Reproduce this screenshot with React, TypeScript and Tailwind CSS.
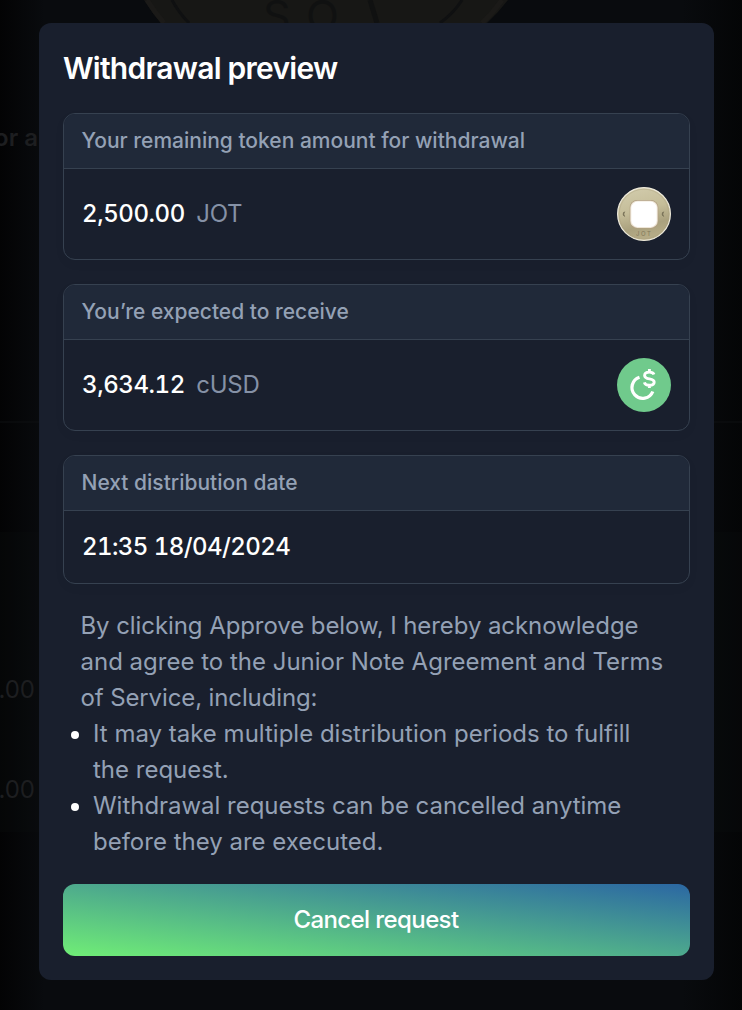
import type { ReactNode } from "react";

function JotCoin() {
  return (
    <svg className="size-[54px] shrink-0" viewBox="0 0 54 54">
      <defs>
        <linearGradient id="coin" x1="0" y1="0" x2="0.25" y2="1">
          <stop offset="0" stopColor="#d3cdae" />
          <stop offset="0.5" stopColor="#c5bd99" />
          <stop offset="0.8" stopColor="#aaa17e" />
          <stop offset="1" stopColor="#b5ab86" />
        </linearGradient>
      </defs>
      <circle cx="27" cy="27" r="26.4" fill="url(#coin)" stroke="#eeeadb" strokeWidth="1.2" />
      <circle cx="27" cy="27" r="24.8" fill="none" stroke="#a99f7d" strokeWidth="0.6" opacity="0.65" />
      <rect x="12.7" y="13" width="28.6" height="28.6" rx="7.5" fill="#b19f82" />
      <rect x="13.3" y="13.7" width="27.4" height="27.2" rx="7" fill="#eee6d7" />
      <rect x="14.3" y="14.5" width="25.4" height="25.4" rx="6.5" fill="#fff" />
      <path d="M7.5 24.8a2.7 2.7 0 0 0 0 4.6l-.8-2.3z" fill="#777057" stroke="#777057" strokeWidth=".9" />
      <path d="M46.5 24.8a2.7 2.7 0 0 0 0 4.6l-.8-2.3z" fill="#777057" stroke="#777057" strokeWidth=".9" />
      <text x="27.3" y="49" textAnchor="middle" fontFamily="Inter, sans-serif" fontSize="6" letterSpacing="1.6" fill="#81785b">JOT</text>
    </svg>
  );
}

function CusdCoin() {
  return (
    <svg className="size-[54px] shrink-0" viewBox="0 0 54 54" fill="none">
      <circle cx="27" cy="27" r="27" fill="#70ca8c" />
      <path d="M22.5 19.2A10.8 10.8 0 1 0 35.8 33.5" stroke="#fff" strokeWidth="3.3" />
      <path d="M37 16.5c-.7-1.7-2.2-2.4-4.7-2.4-3 0-4.7 1.3-4.7 3.3 0 5 9.6 1.9 9.6 6.6 0 2.1-1.8 3.3-4.8 3.3-2.7 0-4.5-1-5.1-2.9M32.4 11v3.2M32.4 27v3" stroke="#fff" strokeWidth="2.9" />
    </svg>
  );
}

function Card({ title, children }: { title: string; children: ReactNode }) {
  return (
    <section className="overflow-hidden rounded-xl border border-[#364150] shadow-[0_4px_12px_rgba(0,0,0,0.03)]">
      <h2 className="flex h-[55px] items-center border-b border-[#364150] bg-[#202939] px-[17.5px] text-[21px] font-medium text-[#94a1b5]">
        {title}
      </h2>
      {children}
    </section>
  );
}

function Amount({ value, unit, icon }: { value: string; unit: string; icon: ReactNode }) {
  return (
    <div className="flex h-[90px] items-center justify-between px-[18px]">
      <p className="flex gap-[11.5px] text-2xl">
        <span className="font-medium tracking-[-0.42px] text-white tabular-nums">{value}</span>
        <span className="tracking-[-0.3px] text-[#8591a6]">{unit}</span>
      </p>
      {icon}
    </div>
  );
}

export default function App() {
  return (
    <main className="relative h-[1010px] w-[742px] overflow-hidden bg-[#050609] bg-[linear-gradient(90deg,#030304_0%,#090b0e_6%,#090b0e_92%,#040506_100%)] px-[39px] pt-[23px] pr-[28px] font-['Inter',sans-serif]">
      <svg className="absolute inset-0 h-[1010px] w-[742px]" fill="none">
        <path d="M144 0h364q-10 13-21 23H161Q152 13 144 0z" fill="#171715" />
        <path d="M147 0q8 13 17 23M502 0q-9 13-20 23" stroke="#1b1a18" strokeWidth="5" />
        <path d="M172 0q7 13 17 23M462 0q-8 13-22 23" stroke="#0f1011" strokeWidth="3" />
        <path d="M0 422h39M714 422h28" stroke="#0e1013" />
        <path d="M0 532h39v300H0zM714 532h28v300h-28z" fill="#0b0f0f" opacity=".25" />
        <g fontFamily="Inter, sans-serif" fill="#1d1e20">
          <text x="263" y="31" fontSize="43" fill="#101111">S</text>
          <text x="306" y="31" fontSize="43" fill="#101111">O</text>
          <path d="m370 0 7 23" stroke="#101111" strokeWidth="5" />
          <text x="38" y="146" textAnchor="end" fontSize="24" fontWeight="600">or a</text>
          <text x="35" y="698" textAnchor="end" fontSize="24">.00</text>
          <text x="35" y="798" textAnchor="end" fontSize="24">.00</text>
        </g>
      </svg>
      <div className="relative flex h-[957px] w-[675px] flex-col rounded-xl bg-[#191f2d] p-6">
        <h1 className="h-[66px] pt-[3px] text-[30px] leading-9 font-semibold tracking-[-0.75px] text-white">Withdrawal preview</h1>
        <div className="flex flex-col gap-6">
          <Card title="Your remaining token amount for withdrawal">
            <Amount value="2,500.00" unit="JOT" icon={<JotCoin />} />
          </Card>
          <Card title="You’re expected to receive">
            <Amount value="3,634.12" unit="cUSD" icon={<CusdCoin />} />
          </Card>
          <Card title="Next distribution date">
            <p className="flex h-[72px] items-center px-[18px] text-2xl font-medium tracking-[-0.56px] text-white tabular-nums">21:35 18/04/2024</p>
          </Card>
        </div>
        <div className="mt-6 text-2xl leading-9 tracking-normal text-[#94a1b5]">
          <p className="pl-[17.5px]">
            <span className="tracking-[-0.08px]">By clicking Approve below, I hereby acknowledge</span><br />
            and agree to the Junior Note Agreement and Terms<br />
            <span className="tracking-[-0.12px]">of Service, including:</span>
          </p>
          <ul>
            <li className="flex gap-[14px] pl-2">
              <span className="mt-[15px] size-2 shrink-0 rounded-full bg-white" />
              <span>It may take multiple distribution periods to fulfill<br />the request.</span>
            </li>
            <li className="flex gap-[14px] pl-2">
              <span className="mt-[15px] size-2 shrink-0 rounded-full bg-white" />
              <span><span className="tracking-[-0.03px]">Withdrawal requests can be cancelled anytime</span><br />before they are executed.</span>
            </li>
          </ul>
        </div>
        <button className="mt-6 h-[72px] rounded-xl bg-[linear-gradient(to_top_right,#70ed76,#2b67a3)] pr-px text-2xl font-medium tracking-[-0.6px] text-white">Cancel request</button>
      </div>
    </main>
  );
}
